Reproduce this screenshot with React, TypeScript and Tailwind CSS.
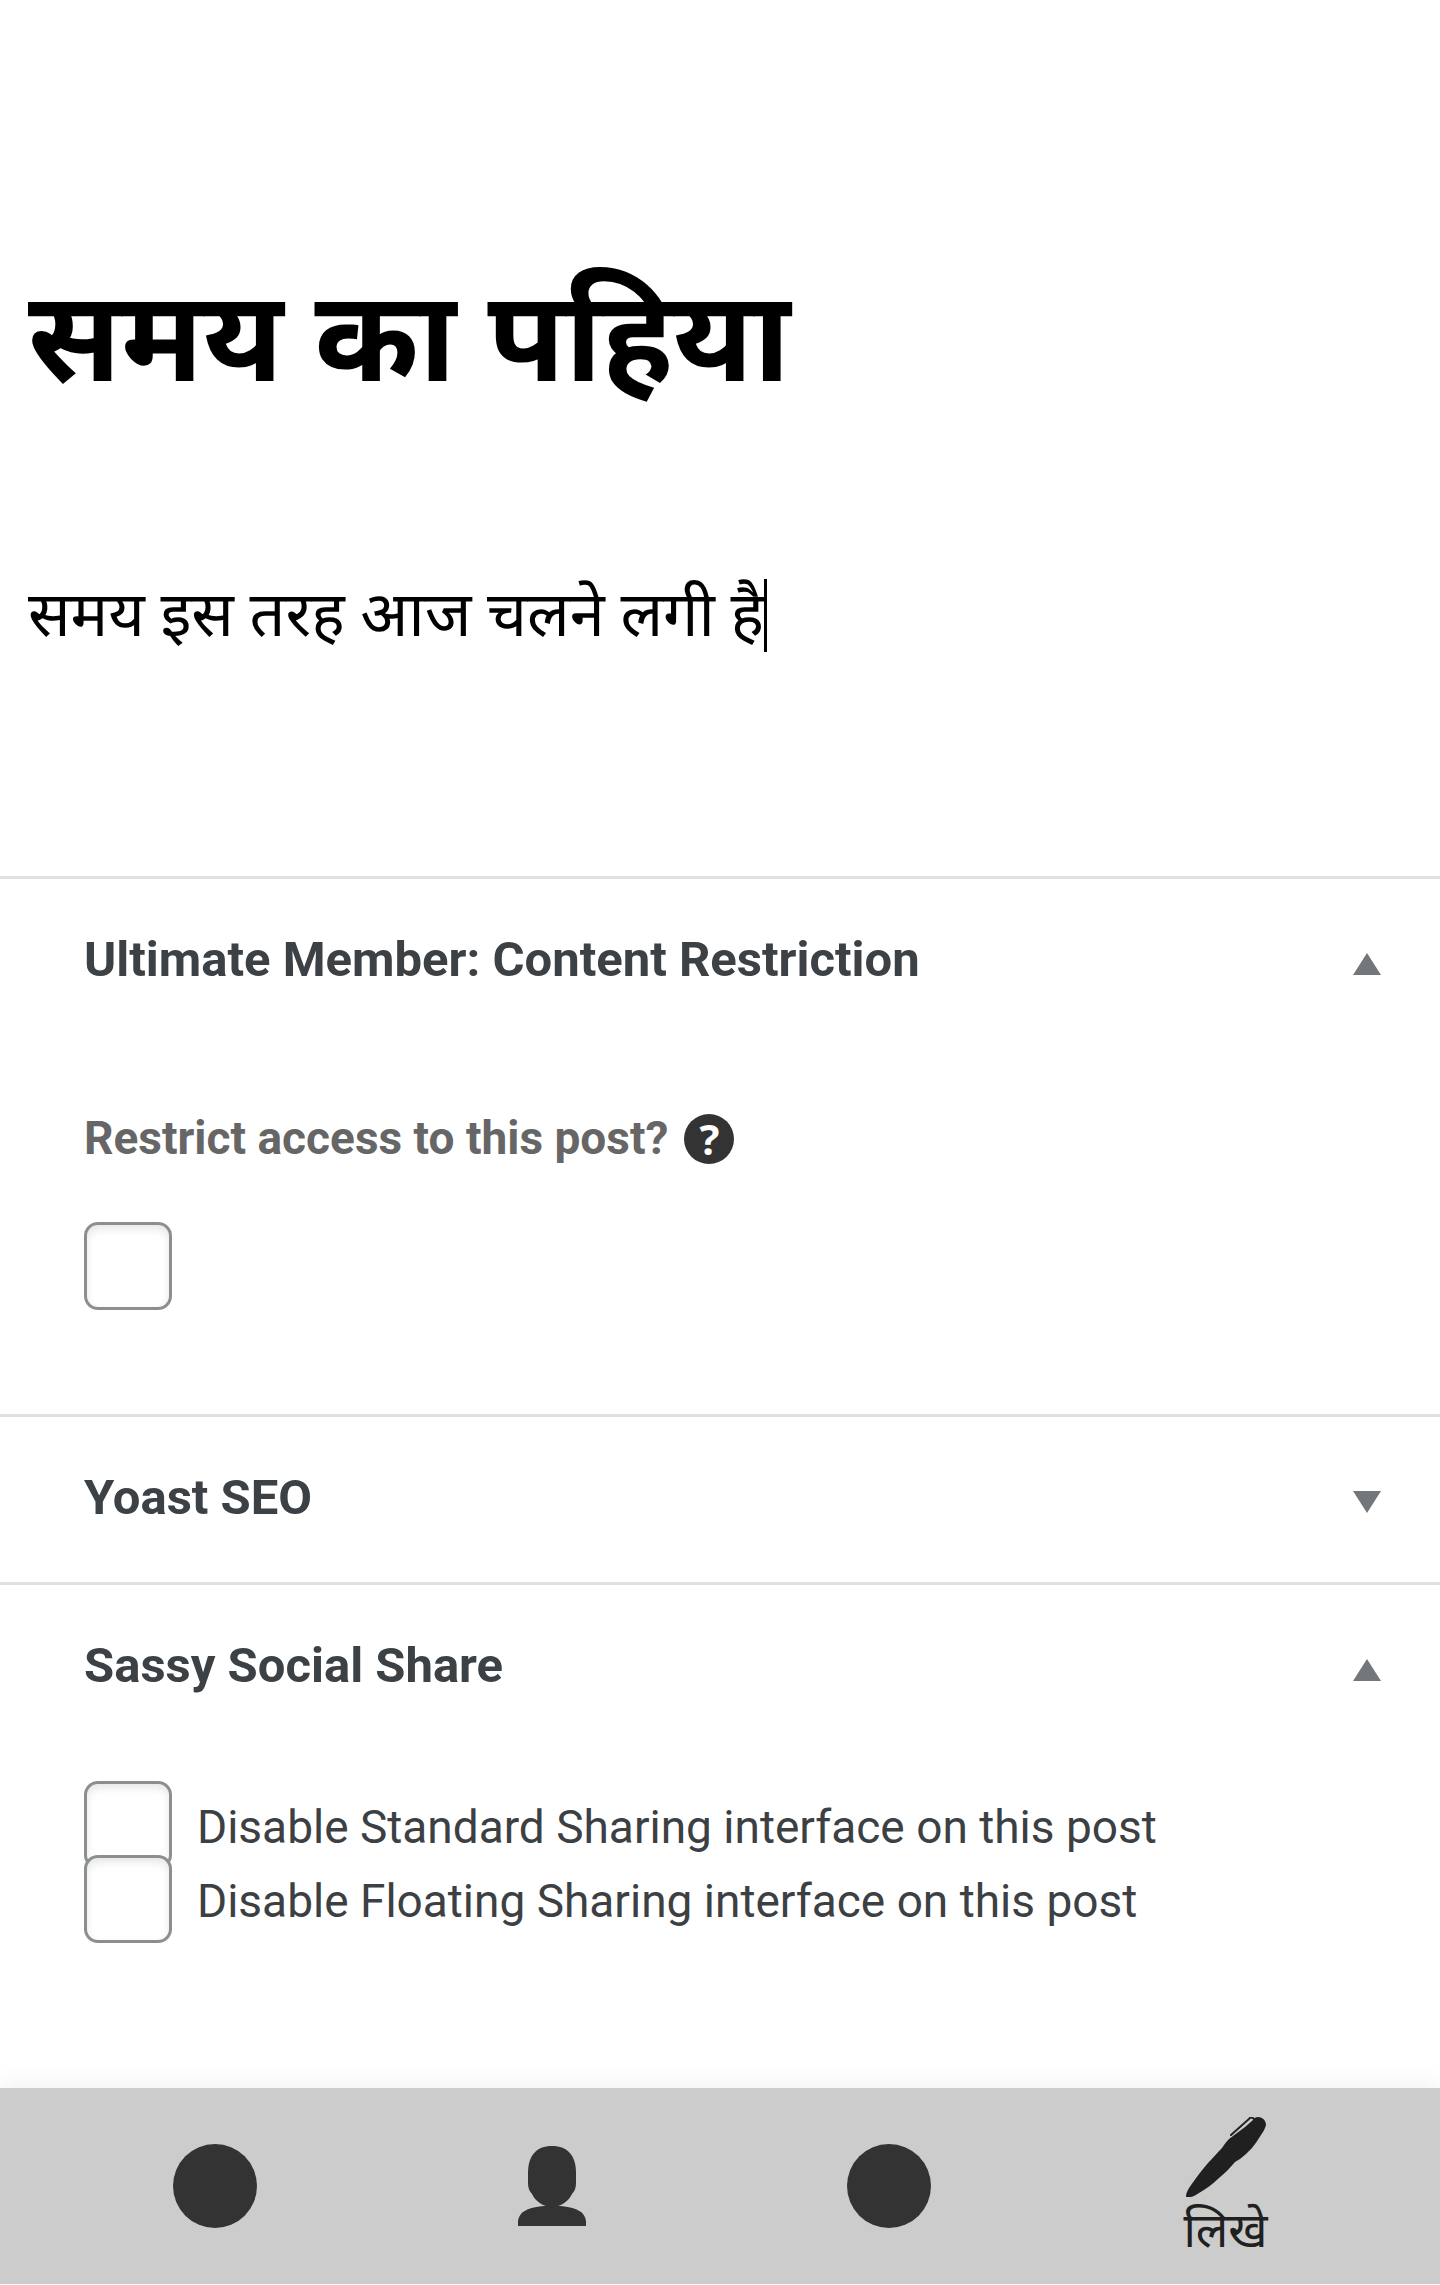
import { useState } from "react";

type PanelProps = {
  title: string;
  defaultOpen?: boolean;
  children?: React.ReactNode;
};

function Panel({ title, defaultOpen = false, children }: PanelProps) {
  const [open, setOpen] = useState(defaultOpen);

  return (
    <section className="border-t-3 border-[#e0e0e0] bg-white">
      <h2>
        <button
          type="button"
          aria-expanded={open}
          onClick={() => setOpen(!open)}
          className="flex h-[165px] w-full items-center justify-between pr-[59px] pb-1 pl-[84px] text-left text-[49px] font-bold text-[#3c4146]"
        >
          {title}
          <svg viewBox="0 0 28 22" className="mt-2 h-[22px] w-7 fill-[#72777c]" aria-hidden="true">
            {open ? <path d="M14 0 28 22H0z" /> : <path d="M0 0h28L14 22z" />}
          </svg>
        </button>
      </h2>
      {open && children}
    </section>
  );
}

const checkboxClass =
  "size-[88px] shrink-0 appearance-none rounded-[14px] border-3 border-[#8c8f90] bg-white shadow-[inset_0_4px_8px_rgba(0,0,0,0.1)] checked:bg-[#2271b1]";

function ShareOption({ id, label }: { id: string; label: string }) {
  return (
    <div className="flex h-[74px] items-center gap-[25px]">
      <input id={id} type="checkbox" className={checkboxClass} />
      <label htmlFor={id} className="pt-1">
        {label}
      </label>
    </div>
  );
}

function PersonIcon() {
  return (
    <svg viewBox="0 0 68 80" className="h-20 w-[68px] fill-[#333]" aria-hidden="true">
      <path d="M34 0C50 0 58 10 58 27v10c0 4-1 8-4 11-3 6-8 10-14 12 17 2 28 8 28 18v2H0v-2c0-10 11-16 28-18-6-2-11-6-14-12-3-3-4-7-4-11V27C10 10 18 0 34 0z" />
      <path d="M27 60h14c16 1 27 5 27 17v3H0v-3c0-12 11-16 27-17z" />
    </svg>
  );
}

function PenIcon() {
  return (
    <svg viewBox="0 0 80 80" className="size-20 fill-[#202020]" aria-hidden="true">
      <path d="M0 80c0-5 4-11 8-16 4-6 9-12 14-18 5-5 9-10 14-15 2-3 4-6 7-9L59 10l8-7c1-2 3-3 5-3 5 0 8 4 8 8-1 4-3 7-5 10-3 5-6 9-9 13-4 4-8 8-12 11l-5 3C44 51 39 56 33 61c-6 6-13 11-20 15-4 3-9 5-13 4z" />
      <path
        d="M45 18 63 2c1-2 3-2 5 0"
        fill="none"
        stroke="#202020"
        strokeWidth="2"
        strokeLinecap="round"
      />
    </svg>
  );
}

export default function App() {
  return (
    <div className="bg-white font-['Roboto','Noto_Sans_Devanagari','Noto_Sans',sans-serif] text-[46px] text-[#3c4043]">
      <main>
        <article className="px-7 pt-[238px] pb-[211px] text-black">
          <h1 contentEditable suppressContentEditableWarning className="text-[126px] leading-[200px] font-bold outline-none">
            समय का पहिया
          </h1>
          <p className="mt-[127px] flex items-center text-[63px] leading-[100px]">
            <span contentEditable suppressContentEditableWarning className="outline-none">
              समय इस तरह आज चलने लगी है
            </span>
            <span className="h-[73px] w-[3px] bg-black" />
          </p>
        </article>

        <Panel title="Ultimate Member: Content Restriction" defaultOpen>
          <div className="px-[84px] pt-[60px] pb-[104px]">
            <div className="flex items-center gap-4 font-bold text-[#666]">
              <label htmlFor="restrict">Restrict access to this post?</label>
              <button
                type="button"
                aria-label="Help"
                className="flex size-[50px] items-center justify-center rounded-full bg-[#333] font-['Open_Sans'] text-[42px] leading-none font-bold text-white"
              >
                ?
              </button>
            </div>
            <input id="restrict" type="checkbox" className={`mt-[49px] block ${checkboxClass}`} />
          </div>
        </Panel>

        <Panel title="Yoast SEO" />

        <Panel title="Sassy Social Share" defaultOpen>
          <div className="px-[84px] pt-[38px] pb-[152px]">
            <ShareOption id="standard" label="Disable Standard Sharing interface on this post" />
            <ShareOption id="floating" label="Disable Floating Sharing interface on this post" />
          </div>
        </Panel>
      </main>

      <nav className="grid h-[196px] grid-cols-4 bg-[#ccc] px-[46px] text-[#202020] shadow-[0_-4px_24px_rgba(0,0,0,0.06)]">
        <a href="#home" aria-label="Home" className="flex items-center justify-center">
          <span className="size-[84px] rounded-full bg-[#333]" />
        </a>
        <a href="#profile" aria-label="Profile" className="flex items-center justify-center">
          <PersonIcon />
        </a>
        <a href="#explore" aria-label="Explore" className="flex items-center justify-center">
          <span className="size-[84px] rounded-full bg-[#333]" />
        </a>
        <a href="#write" className="flex flex-col items-center pt-[29px] text-[48px] leading-[68px]">
          <PenIcon />
          लिखे
        </a>
      </nav>
    </div>
  );
}
